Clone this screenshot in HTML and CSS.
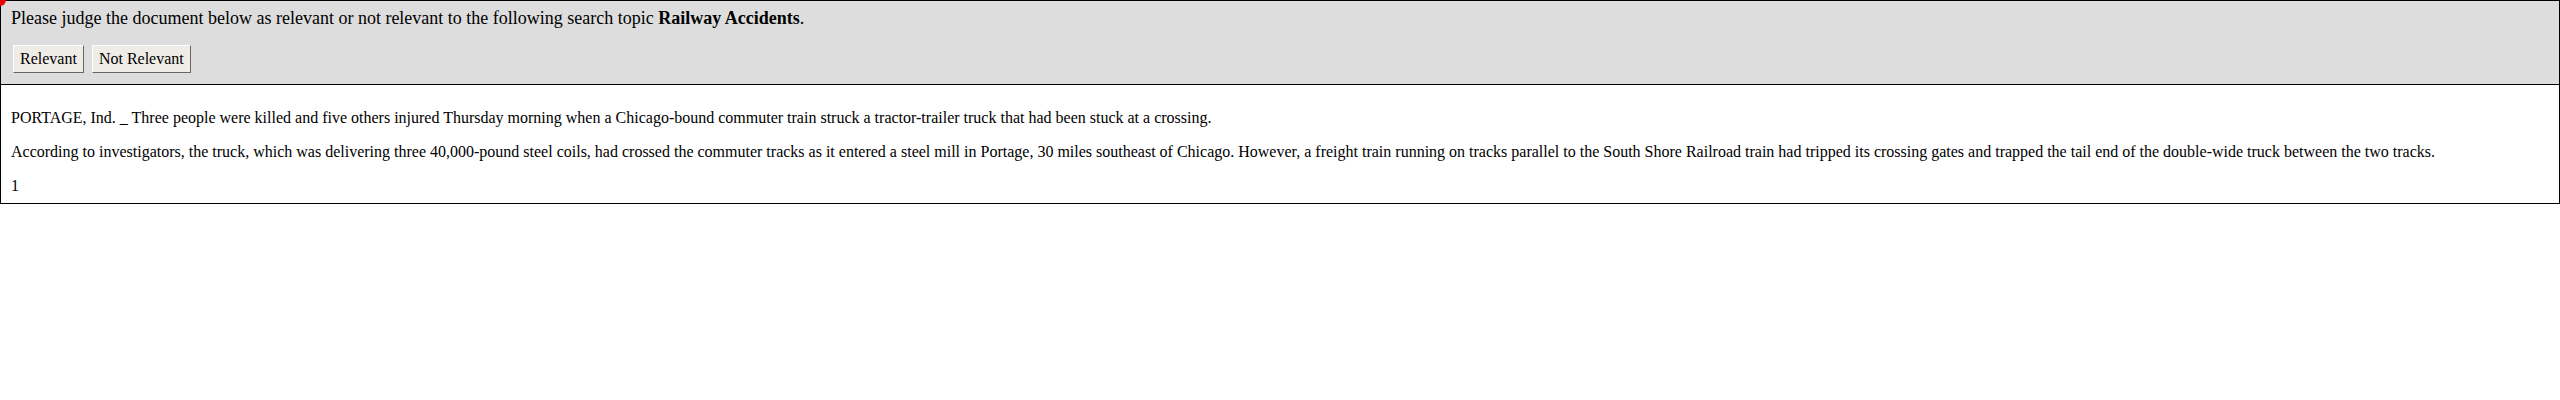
FILE: index.html
```html
<!DOCTYPE html>
<html>
<head>
<meta charset="utf-8">
<link rel="stylesheet" href="styles.css">
</head>
<body>
<div class="dot"></div>
<div class="frame">
  <div class="header">
    <div class="prompt">Please judge the document below as relevant or not relevant to the following search topic <b>Railway Accidents</b>.</div>
    <div class="buttons">
      <button class="btn">Relevant</button>
      <button class="btn">Not Relevant</button>
    </div>
  </div>
  <div class="doc">
    <p>PORTAGE, Ind. _ Three people were killed and five others injured Thursday morning when a Chicago-bound commuter train struck a tractor-trailer truck that had been stuck at a crossing.</p>
    <p>According to investigators, the truck, which was delivering three 40,000-pound steel coils, had crossed the commuter tracks as it entered a steel mill in Portage, 30 miles southeast of Chicago. However, a freight train running on tracks parallel to the South Shore Railroad train had tripped its crossing gates and trapped the tail end of the double-wide truck between the two tracks.</p>
    <p>1</p>
  </div>
</div>
</body>
</html>
```
FILE: styles.css
```css
html, body {
  margin: 0;
  padding: 0;
  background: #fff;
}
body {
  font-family: "Liberation Serif", "Times New Roman", serif;
  font-size: 16px;
  color: #000;
  position: relative;
}
.dot {
  position: absolute;
  left: -6px;
  top: -6px;
  width: 12px;
  height: 12px;
  border-radius: 50%;
  background: #e00;
  z-index: 2;
}
.frame {
  border: 1px solid #000;
}
.header {
  background: #ddd;
  border-bottom: 1px solid #000;
  padding: 6px 10px 11px 10px;
}
.prompt {
  font-size: 18px;
  line-height: 22px;
}
.buttons {
  margin-top: 16px;
  display: flex;
  gap: 8px;
  padding-left: 2px;
}
.btn {
  font-family: "Liberation Serif", "Times New Roman", serif;
  font-size: 16px;
  background: #efece8;
  border: 1px solid;
  border-color: #fff #666 #666 #fff;
  padding: 4px 6px;
  line-height: 18px;
  margin: 0;
  color: #000;
}
.doc {
  padding: 8px 10px 0 10px;
}
.doc p {
  margin: 16px 0;
  font-size: 16px;
  line-height: 18px;
}
.doc p:last-child {
  margin-bottom: 8px;
}
```
